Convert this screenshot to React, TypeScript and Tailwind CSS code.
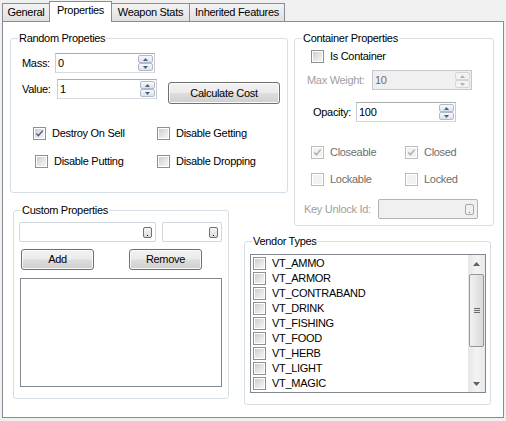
import React from "react";

type BoxProps = { checked?: boolean; disabled?: boolean };

// Win7 style check box glyph
function Box({ checked, disabled }: BoxProps) {
  return (
    <span
      className={`relative flex h-[13px] w-[13px] shrink-0 border bg-white ${
        disabled ? "border-[#bcbcbc]" : "border-[#8e8f8f]"
      }`}
    >
      <span
        className={`absolute inset-[1px] ${
          disabled
            ? "bg-[#f2f2f2]"
            : "bg-gradient-to-br from-[#c9ccd2] via-[#e2e3e6] to-[#f5f5f5]"
        }`}
      />
      {checked && (
        <svg className="absolute left-0 top-0" width="11" height="11" viewBox="0 0 11 11">
          <path
            d="M2.3 5.6 L4.4 7.8 L8.7 2.6"
            fill="none"
            stroke={disabled ? "#a9a9a9" : "#4a5c8f"}
            strokeWidth="1.4"
          />
        </svg>
      )}
    </span>
  );
}

function Check({
  label,
  checked,
  disabled,
  className = "",
}: BoxProps & { label: string; className?: string }) {
  return (
    <div className={`flex h-[13px] items-center ${className}`}>
      <Box checked={checked} disabled={disabled} />
      <span className={`ml-[6px] whitespace-nowrap ${disabled ? "text-[#6d6d6d]" : ""}`}>{label}</span>
    </div>
  );
}

function Arrow({ up, color }: { up?: boolean; color: string }) {
  return (
    <svg width="5" height="3" viewBox="0 0 5 3">
      <path d={up ? "M0 3 L2.5 0 L5 3Z" : "M0 0 L5 0 L2.5 3Z"} fill={color} />
    </svg>
  );
}

function Spin({ disabled }: { disabled?: boolean }) {
  const btn = disabled
    ? "border-[#d3d5d9] bg-[#f2f2f2]"
    : "border-[#b3bac6] bg-gradient-to-b from-[#f7f9fc] to-[#dce3ec]";
  const color = disabled ? "#b0b0b0" : "#4b5f86";
  return (
    <div className="ml-auto flex h-full w-[15px] flex-col">
      <div className={`flex flex-1 items-center justify-center rounded-[2px] border ${btn}`}>
        <Arrow up color={color} />
      </div>
      <div className={`flex flex-1 items-center justify-center rounded-[2px] border ${btn}`}>
        <Arrow color={color} />
      </div>
    </div>
  );
}

function NumBox({ value, disabled, className = "" }: { value: string; disabled?: boolean; className?: string }) {
  return (
    <div
      className={`flex h-[20px] w-[100px] items-center border p-[1px] ${
        disabled
          ? "border-[#c5c7cc] bg-[#f0f0f0] text-[#6d6d6d]"
          : "border-[#abadb3] border-b-[#d5d9e0] border-x-[#c8ccd3] bg-white"
      } ${className}`}
    >
      <span className="pl-[1px]">{value}</span>
      <Spin disabled={disabled} />
    </div>
  );
}

function DotBtn({ disabled }: { disabled?: boolean }) {
  return (
    <span
      className={`flex h-[11px] w-[9px] items-end justify-center rounded-[2px] border pb-[1px] ${
        disabled ? "border-[#a8a8a8] bg-[#f0f0f0]" : "border-[#707070] bg-gradient-to-b from-[#f6f6f6] to-[#dcdcdc]"
      }`}
    >
      <span className={`h-[1px] w-[1px] ${disabled ? "bg-[#7a7a7a]" : "bg-black"}`} />
    </span>
  );
}

function Combo({ className = "", disabled }: { className?: string; disabled?: boolean }) {
  return (
    <div
      className={`flex h-[20px] items-center justify-end rounded-[2px] border pr-[3px] ${
        disabled ? "border-[#afb3b8] bg-[#f0f0f0]" : "border-[#d2d7dd] bg-white"
      } ${className}`}
    >
      <DotBtn disabled={disabled} />
    </div>
  );
}

function Btn({ label, className = "" }: { label: string; className?: string }) {
  return (
    <div
      className={`flex items-center justify-center rounded-[3px] border border-[#707070] bg-[linear-gradient(to_bottom,#f2f2f2_0%,#ebebeb_48%,#dddddd_52%,#cfcfcf_100%)] shadow-[inset_0_0_0_1px_#fafafa] ${className}`}
    >
      {label}
    </div>
  );
}

function Group({ title, className = "", children }: { title: string; className?: string; children?: React.ReactNode }) {
  return (
    <fieldset className={`min-w-0 shrink-0 rounded-[3px] border border-[#d5dfe5] ${className}`}>
      <legend className="ml-[7px] px-[1px] leading-[13px]">{title}</legend>
      {children}
    </fieldset>
  );
}

const tabs = ["General", "Properties", "Weapon Stats", "Inherited Features"];
const tabWidths = ["w-[48px]", "w-[63px]", "w-[79px]", "w-[96px]"];

const vendorTypes = [
  "VT_AMMO",
  "VT_ARMOR",
  "VT_CONTRABAND",
  "VT_DRINK",
  "VT_FISHING",
  "VT_FOOD",
  "VT_HERB",
  "VT_LIGHT",
  "VT_MAGIC",
];

export default function App() {
  return (
    <div className="h-[421px] w-[506px] overflow-hidden bg-[#f0f0f0] font-['Liberation_Sans',Arial,sans-serif] text-[11px] leading-[13px] tracking-[-0.3px] text-black">
      {/* Tab strip */}
      <div className="flex h-[21px] items-end pl-[2px]">
        {tabs.map((t, i) => {
          const active = i === 1;
          return (
            <div
              key={t}
              className={`${tabWidths[i]} ${i > 0 ? "-ml-px" : ""} flex justify-center border border-b-0 border-[#898c95] pt-[2px] whitespace-nowrap ${
                active
                  ? "relative z-10 -mb-px h-[21px] bg-white"
                  : "h-[18px] bg-gradient-to-b from-[#f3f3f3] to-[#e1e1e1]"
              }`}
            >
              {t}
            </div>
          );
        })}
      </div>

      {/* Tab page */}
      <div className="ml-[2px] flex h-[397px] w-[502px] border border-[#898c95] bg-white pl-[7px] pt-[10px]">
        {/* Left column */}
        <div className="flex w-[278px] flex-col">
          <Group title="Random Propeties" className="h-[161px] w-[278px]">
            <div className="ml-[11px] mt-[8px] flex items-center">
              <span className="w-[33px]">Mass:</span>
              <NumBox value="0" />
            </div>
            <div className="ml-[11px] mt-[6px] flex items-start">
              <span className="flex h-[20px] w-[35px] items-center">Value:</span>
              <NumBox value="1" />
              <Btn label="Calculate Cost" className="ml-[11px] mt-[3px] h-[22px] w-[112px]" />
            </div>
            <div className="mt-[23px] flex">
              <Check label="Destroy On Sell" checked className="ml-[22px] w-[124px]" />
              <Check label="Disable Getting" />
            </div>
            <div className="mt-[15px] flex">
              <Check label="Disable Putting" className="ml-[24px] w-[122px]" />
              <Check label="Disable Dropping" />
            </div>
          </Group>

          <Group title="Custom Properties" className="ml-[3px] mt-[11px] h-[195px] w-[216px]">
            <div className="ml-[5px] mt-[5px] flex gap-[6px]">
              <Combo className="w-[137px]" />
              <Combo className="w-[60px]" />
            </div>
            <div className="ml-[7px] mt-[7px] flex">
              <Btn label="Add" className="h-[21px] w-[73px]" />
              <Btn label="Remove" className="ml-[35px] h-[21px] w-[73px]" />
            </div>
            <div className="ml-[6px] mt-[8px] h-[109px] w-[202px] border border-[#828790] bg-white" />
          </Group>
        </div>

        {/* Right column */}
        <div className="ml-[6px] flex flex-col">
          <Group title="Container Properties" className="h-[194px] w-[200px]">
            <Check label="Is Container" className="ml-[16px] mt-[5px]" />
            <div className="ml-[12px] mt-[7px] flex items-center">
              <span className="w-[65px] whitespace-nowrap text-[#a0a0a0]">Max Weight:</span>
              <NumBox value="10" disabled className="h-[19px]" />
            </div>
            <div className="ml-[18px] mt-[12px] flex items-center">
              <span className="w-[43px]">Opacity:</span>
              <NumBox value="100" />
            </div>
            <div className="ml-[16px] mt-[24px] flex">
              <Check label="Closeable" checked disabled className="w-[94px]" />
              <Check label="Closed" checked disabled />
            </div>
            <div className="ml-[16px] mt-[14px] flex">
              <Check label="Lockable" disabled className="w-[94px]" />
              <Check label="Locked" disabled />
            </div>
            <div className="ml-[9px] mt-[13px] flex items-center">
              <span className="w-[74px] whitespace-nowrap text-[#a0a0a0]">Key Unlock Id:</span>
              <Combo disabled className="w-[100px]" />
            </div>
          </Group>

          <Group title="Vendor Types" className="-ml-[50px] mt-[9px] h-[170px] w-[247px]">
            <div className="ml-[5px] mt-[6px] flex h-[139px] w-[236px] border border-[#828790] bg-white">
              <div className="flex-1 overflow-hidden pt-[1px]">
                {vendorTypes.map((v) => (
                  <div key={v} className="flex h-[15px] items-center pl-[2px]">
                    <Box />
                    <span className="ml-[6px]">{v}</span>
                  </div>
                ))}
              </div>
              {/* Scrollbar */}
              <div className="flex w-[17px] flex-col bg-gradient-to-r from-[#e6e6e6] via-[#f4f4f4] to-[#e9e9e9]">
                <div className="flex h-[17px] items-center justify-center">
                  <svg width="7" height="4" viewBox="0 0 7 4">
                    <path d="M0 4 L3.5 0 L7 4Z" fill="#606060" />
                  </svg>
                </div>
                <div className="flex-1 px-[1px] pt-[2px]">
                  <div className="flex h-[73px] flex-col items-center justify-center gap-[1px] rounded-[2px] border border-[#979797] bg-gradient-to-r from-[#f2f2f2] to-[#d9d9d9]">
                    <span className="h-px w-[6px] bg-[#6a6a6a]" />
                    <span className="h-px w-[6px] bg-[#6a6a6a]" />
                    <span className="h-px w-[6px] bg-[#6a6a6a]" />
                  </div>
                </div>
                <div className="flex h-[17px] items-center justify-center">
                  <svg width="7" height="4" viewBox="0 0 7 4">
                    <path d="M0 0 L7 0 L3.5 4Z" fill="#606060" />
                  </svg>
                </div>
              </div>
            </div>
          </Group>
        </div>
      </div>
    </div>
  );
}
